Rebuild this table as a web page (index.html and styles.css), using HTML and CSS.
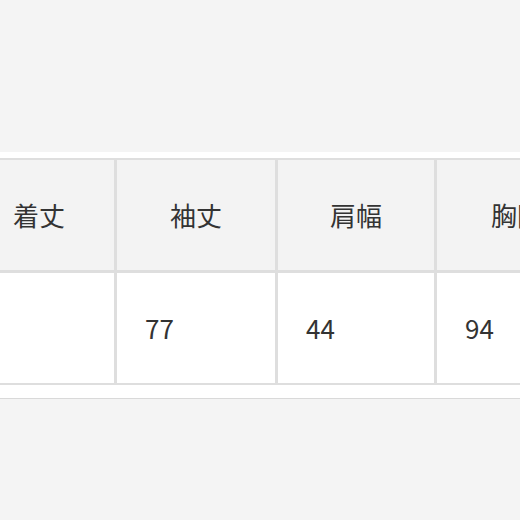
FILE: index.html
```html
<!DOCTYPE html>
<html lang="ja">
<head>
<meta charset="utf-8">
<title>サイズ表</title>
<link rel="stylesheet" href="styles.css">
</head>
<body>
<div class="band">
  <div class="size-table">
    <div class="cell head">着丈</div>
    <div class="cell head">袖丈</div>
    <div class="cell head">肩幅</div>
    <div class="cell head">胸囲</div>
    <div class="cell data"></div>
    <div class="cell data">77</div>
    <div class="cell data">44</div>
    <div class="cell data">94</div>
  </div>
</div>
</body>
</html>
```

FILE: styles.css
```css
html, body {
  margin: 0;
  padding: 0;
  background: #f4f4f4;
  font-family: "Noto Sans CJK JP", "Noto Sans", sans-serif;
  color: #333333;
}

.band {
  margin-top: 152px;
  background: #ffffff;
  padding: 6px 0 13px;
  border-bottom: 1px solid #d9d9d9;
  overflow: hidden;
}

.size-table {
  display: grid;
  grid-template-columns: 150px 158px 156px 160px;
  grid-template-rows: 110px 110px;
  gap: 3px;
  padding: 2px 0;
  margin-left: -36px;
  width: max-content;
  background: #dedede;
}

.cell {
  display: flex;
  align-items: center;
  font-size: 26px;
  line-height: 1;
}

.head {
  background: #f3f3f3;
  justify-content: center;
}

.data {
  background: #ffffff;
  justify-content: flex-start;
  padding-left: 28px;
}
```
